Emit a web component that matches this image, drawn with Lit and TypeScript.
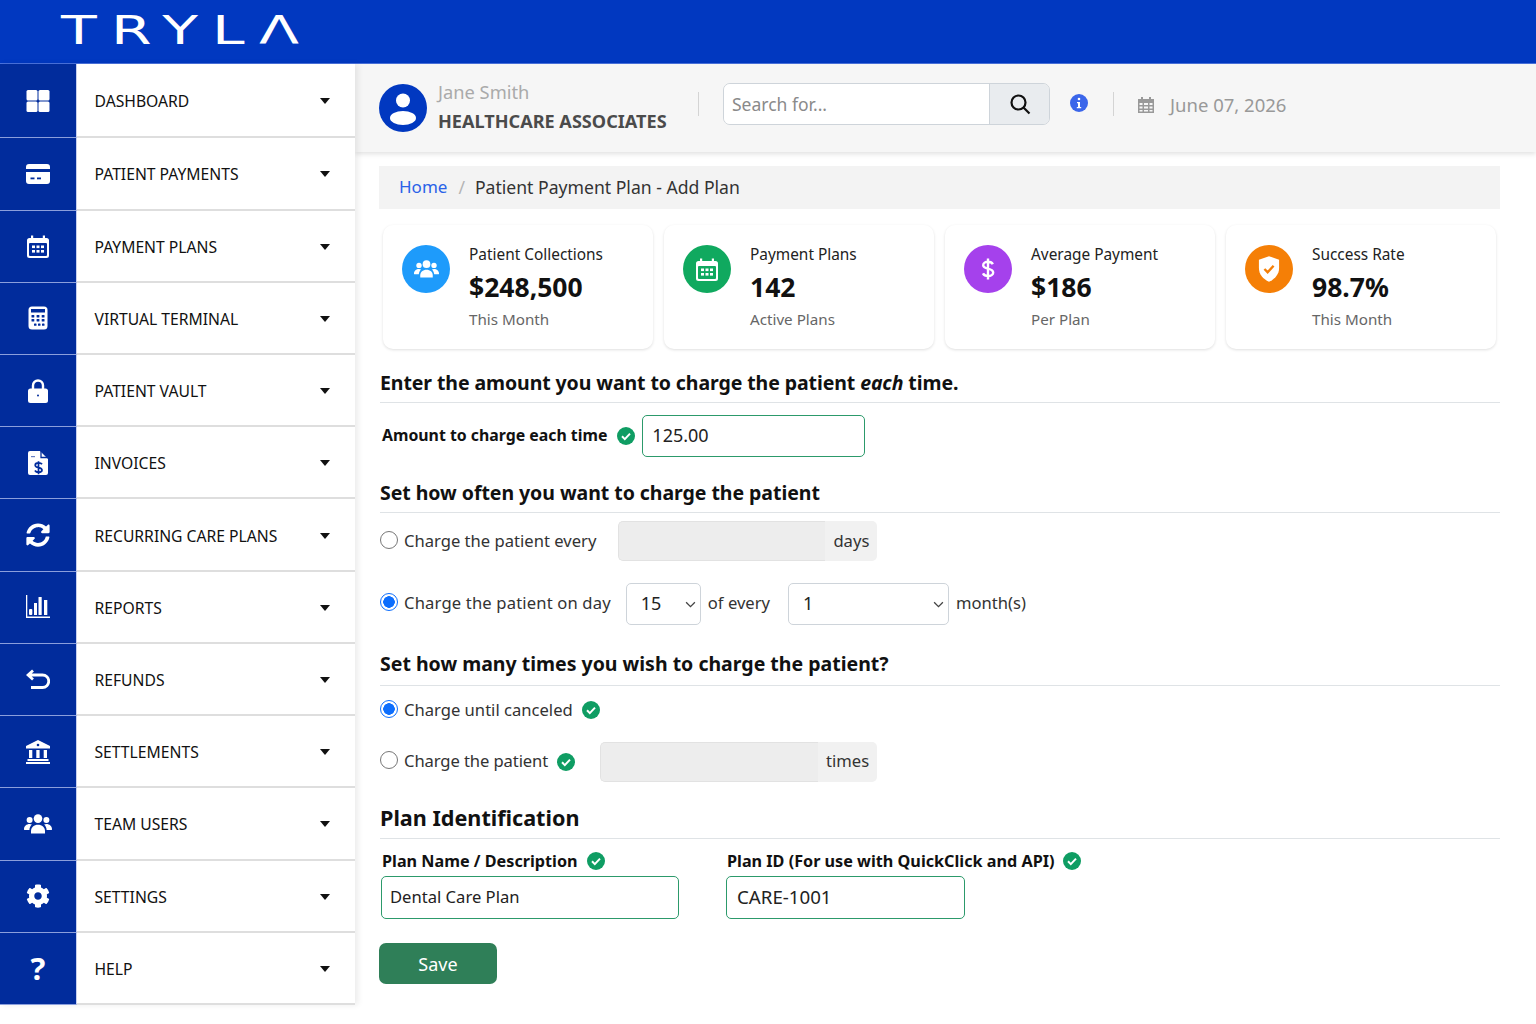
import { LitElement, html, css } from 'lit';
import { customElement } from 'lit/decorators.js';

const B = '#012c9c';

const syncPath = 'M370.72 133.28C339.458 104.008 298.888 87.962 255.848 88c-77.458.068-144.328 53.178-162.791 126.85-1.344 5.363-6.122 9.15-11.651 9.15H24.103c-7.498 0-13.194-6.807-11.807-14.176C33.933 94.924 134.813 8 256 8c66.448 0 126.791 26.136 171.315 68.685L463.03 40.97C478.149 25.851 504 36.559 504 57.941V192c0 13.255-10.745 24-24 24H345.941c-21.382 0-32.09-25.851-16.971-40.971l41.75-41.749zM32 296h134.059c21.382 0 32.09 25.851 16.971 40.971l-41.75 41.75c31.262 29.273 71.835 45.319 114.876 45.28 77.418-.07 144.315-53.144 162.787-126.849 1.344-5.363 6.122-9.15 11.651-9.15h57.304c7.498 0 13.194 6.807 11.807 14.176C478.067 417.076 377.187 504 256 504c-66.448 0-126.791-26.136-171.315-68.685L48.97 471.03C33.851 486.149 8 475.441 8 454.059V320c0-13.255 10.745-24 24-24z';
const gearPath = 'M487.4 315.7l-42.6-24.6c4.3-23.2 4.3-47 0-70.2l42.6-24.6c4.9-2.8 7.1-8.6 5.5-14-11.1-35.6-30-67.8-54.7-94.6-3.8-4.1-10-5.1-14.8-2.3L380.8 110c-17.9-15.4-38.5-27.3-60.8-35.1V25.8c0-5.6-3.9-10.5-9.4-11.7-36.7-8.2-74.3-7.8-109.2 0-5.5 1.2-9.4 6.1-9.4 11.7V75c-22.2 7.9-42.8 19.8-60.8 35.1L88.7 85.5c-4.9-2.8-11-1.9-14.8 2.3-24.7 26.7-43.6 58.9-54.7 94.6-1.7 5.4.6 11.2 5.5 14L67.3 221c-4.3 23.2-4.3 47 0 70.2l-42.6 24.6c-4.9 2.8-7.1 8.6-5.5 14 11.1 35.6 30 67.8 54.7 94.6 3.8 4.1 10 5.1 14.8 2.3l42.6-24.6c17.9 15.4 38.5 27.3 60.8 35.1v49.2c0 5.6 3.9 10.5 9.4 11.7 36.7 8.2 74.3 7.8 109.2 0 5.5-1.2 9.4-6.1 9.4-11.7v-49.2c22.2-7.9 42.8-19.8 60.8-35.1l42.6 24.6c4.9 2.8 11 1.9 14.8-2.3 24.7-26.7 43.6-58.9 54.7-94.6 1.5-5.5-.7-11.3-5.6-14.1zM256 336c-44.1 0-80-35.9-80-80s35.9-80 80-80 80 35.9 80 80-35.9 80-80 80z';

const usersIcon = html`<svg viewBox="0 0 28 20" width="28" height="20" fill="currentColor">
  <circle cx="14" cy="4.6" r="4.3"/><circle cx="5.6" cy="6" r="3"/><circle cx="22.4" cy="6" r="3"/>
  <path d="M7 19.5v-2.6c0-3.6 3-6.2 7-6.2s7 2.6 7 6.2v2.6z"/>
  <path d="M5.6 10c.8 0 1.7.2 2.3.6-1.5 1.3-2.4 3.3-2.5 5.4H.3C0 15.8 0 15.500 0 15c0-2.800 2.500-5 5.600-5zM22.400 10c-.8 0-1.700.2-2.300.6 1.500 1.300 2.400 3.300 2.500 5.400h5.100c.3-.2.3-.5.3-1 0-2.800-2.500-5-5.600-5z"/>
</svg>`;

const calIcon = (c: string) => html`<svg viewBox="0 0 24 24" width="24" height="24" fill="none">
  <path fill="currentColor" d="M5 1.500h2.200v2.500h9.600V1.500H19v2.500h1.500A2.500 2.500 0 0 1 23 6.500v15a2.500 2.500 0 0 1-2.500 2.500h-17A2.500 2.500 0 0 1 1 21.500v-15A2.500 2.500 0 0 1 3.500 4H5z"/>
  <rect x="3" y="9" width="18" height="13" rx="1" fill="${c}"/>
  <g fill="currentColor"><rect x="6" y="11.500" width="3" height="2.600"/><rect x="10.500" y="11.500" width="3" height="2.600"/><rect x="15" y="11.500" width="3" height="2.600"/><rect x="6" y="16" width="3" height="2.600"/><rect x="10.500" y="16" width="3" height="2.600"/><rect x="15" y="16" width="3" height="2.600"/></g>
</svg>`;

const menu = [
  { label: 'DASHBOARD', icon: html`<svg viewBox="0 0 24 24" width="24" height="24" fill="currentColor"><rect x="0.500" y="1" width="11" height="10.500" rx="1.500"/><rect x="12.500" y="1" width="11" height="10.500" rx="1.500"/><rect x="0.500" y="12.500" width="11" height="10.500" rx="1.500"/><rect x="12.500" y="12.500" width="11" height="10.500" rx="1.500"/></svg>` },
  { label: 'PATIENT PAYMENTS', icon: html`<svg viewBox="0 0 24 20" width="24" height="20"><path fill="currentColor" d="M3 0h18a3 3 0 0 1 3 3v2H0V3a3 3 0 0 1 3-3zM0 8h24v9a3 3 0 0 1-3 3H3a3 3 0 0 1-3-3z"/><rect x="4.500" y="13.500" width="4" height="1.800" fill="${B}"/><rect x="11" y="13.500" width="4" height="1.800" fill="${B}"/></svg>` },
  { label: 'PAYMENT PLANS', icon: calIcon(B) },
  { label: 'VIRTUAL TERMINAL', icon: html`<svg viewBox="0 0 20 24" width="20" height="24"><rect width="19" height="23" x="0.500" y="0.500" rx="3.500" fill="currentColor"/><rect x="3" y="3" width="14" height="3.500" fill="${B}"/><g fill="${B}"><rect x="3.500" y="9" width="2.800" height="2.500" rx=".6"/><rect x="8.600" y="9" width="2.800" height="2.500" rx=".6"/><rect x="13.700" y="9" width="2.800" height="2.500" rx=".6"/><rect x="3.500" y="13" width="2.800" height="2.500" rx=".6"/><rect x="8.600" y="13" width="2.800" height="2.500" rx=".6"/><rect x="13.700" y="13" width="2.800" height="2.500" rx=".6"/><rect x="6" y="17.500" width="2.500" height="2.300" rx=".6"/><rect x="10" y="17.500" width="2.500" height="2.300" rx=".6"/><rect x="14" y="17.500" width="2.500" height="2.300" rx=".6"/></g></svg>` },
  { label: 'PATIENT VAULT', icon: html`<svg viewBox="0 0 20 24" width="20" height="24"><path d="M5 10V6.500a5 5 0 0 1 10 0V10" fill="none" stroke="currentColor" stroke-width="2.400"/><rect y="9.500" x="0" width="20" height="14.500" rx="2.500" fill="currentColor"/><circle cx="10" cy="16.500" r="1" fill="${B}"/></svg>` },
  { label: 'INVOICES', icon: html`<svg viewBox="0 0 20 24" width="20" height="24"><path fill="currentColor" d="M2 0h10l8 8v14a2 2 0 0 1-2 2H2a2 2 0 0 1-2-2V2a2 2 0 0 1 2-2z"/><path d="M13 0v6.500h7" fill="none" stroke="${B}" stroke-width="1.300"/><path d="M14 13.300c-.6-1-1.900-1.500-3.500-1.500-2 0-3.300 1-3.300 2.400 0 3.200 6.800 1.700 6.800 4.800 0 1.400-1.400 2.300-3.400 2.300-1.700 0-3-.7-3.700-1.800M10.500 10.300v13" fill="none" stroke="${B}" stroke-width="1.700"/><rect x="3" y="5" width="4" height="1.200" fill="${B}" opacity=".6"/></svg>` },
  { label: 'RECURRING CARE PLANS', icon: html`<svg viewBox="0 0 512 512" width="24" height="24" fill="currentColor"><path d="${syncPath}"/></svg>` },
  { label: 'REPORTS', icon: html`<svg viewBox="0 0 24 24" width="24" height="24" fill="currentColor"><path d="M0 0h1.300v21.500H24V23H0z"/><rect x="3" y="14" width="3.300" height="6" rx="1"/><rect x="8" y="8" width="3" height="12"/><rect x="12.500" y="2" width="3.200" height="18" rx=".6"/><rect x="18" y="5" width="3.300" height="15"/></svg>` },
  { label: 'REFUNDS', icon: html`<svg viewBox="0 0 24 20" width="24" height="20" fill="none" stroke="currentColor" stroke-width="2.800"><path d="M7 1.500 2 6l5 4.500M2.500 6h14a5.500 5.500 0 0 1 0 12.500H5"/></svg>` },
  { label: 'SETTLEMENTS', icon: html`<svg viewBox="0 0 24 24" width="24" height="24"><path fill="currentColor" d="M12 0 24 6v2.500H0V6z"/><circle cx="12" cy="5" r="1.300" fill="${B}"/><g fill="currentColor"><rect x="3" y="10" width="3.300" height="8"/><rect x="10.300" y="10" width="3.300" height="8"/><rect x="17.700" y="10" width="3.300" height="8"/><rect x="1.500" y="19" width="21" height="2"/><rect y="22" width="24" height="2"/></g></svg>` },
  { label: 'TEAM USERS', icon: usersIcon },
  { label: 'SETTINGS', icon: html`<svg viewBox="0 0 512 512" width="24" height="24" fill="currentColor"><path d="${gearPath}"/></svg>` },
  { label: 'HELP', icon: html`<span class="qmark">?</span>` },
];

const cards = [
  { title: 'Patient Collections', value: '$248,500', sub: 'This Month', color: '#1e9bfb', icon: html`<svg viewBox="0 0 28 20" width="25" height="18" fill="#fff"><circle cx="14" cy="4.600" r="4.300"/><circle cx="5.600" cy="6" r="3"/><circle cx="22.400" cy="6" r="3"/><path d="M7 19.500v-2.600c0-3.600 3-6.200 7-6.200s7 2.600 7 6.200v2.600z"/><path d="M5.600 10c.8 0 1.700.2 2.300.6-1.500 1.300-2.400 3.300-2.500 5.400H.3C0 15.800 0 15.500 0 15c0-2.800 2.500-5 5.600-5zM22.400 10c-.8 0-1.700.2-2.300.6 1.500 1.300 2.400 3.300 2.500 5.400h5.100c.3-.2.3-.5.3-1 0-2.800-2.500-5-5.600-5z"/></svg>` },
  { title: 'Payment Plans', value: '142', sub: 'Active Plans', color: '#10a95f', icon: html`<span class="white">${calIcon('#10a95f')}</span>` },
  { title: 'Average Payment', value: '$186', sub: 'Per Plan', color: '#a541ec', icon: html`<svg viewBox="0 0 20 28" width="16" height="24"><path d="M16 8c-.9-2-3.200-3-6-3-3.400 0-6 1.700-6 4.200 0 5.600 12.500 3 12.500 9.100 0 2.600-2.800 4.400-6.300 4.400-3 0-5.400-1.200-6.500-3.300M10 1v26" fill="none" stroke="#fff" stroke-width="3" /></svg>` },
  { title: 'Success Rate', value: '98.7%', sub: 'This Month', color: '#f57f06', icon: html`<svg viewBox="0 0 24 28" width="22" height="26"><path fill="#fff" d="M12 0 23 4v9c0 7-4.500 12-11 15C5.500 25 1 20 1 13V4z"/><path d="M7 14l3.500 3.500L17 10.500" fill="none" stroke="#f57f06" stroke-width="2.600"/></svg>` },
];

const check = html`<svg class="check" viewBox="0 0 18 18" width="18" height="18"><circle cx="9" cy="9" r="9" fill="#0f9d63"/><path d="M5 9.300l2.800 2.800L13 6.600" fill="none" stroke="#fff" stroke-width="2"/></svg>`;

const chevron = html`<svg class="chev" viewBox="0 0 12 8" width="11" height="7" fill="none" stroke="#444" stroke-width="1.500"><path d="M1 1.500l5 5 5-5"/></svg>`;

@customElement('app-root')
export class AppRoot extends LitElement {
  static styles = css`
    :host {
      display: block;
      width: 1536px;
      height: 1024px;
      overflow: hidden;
      background: #fff;
      font-family: 'Noto Sans', 'Liberation Sans', sans-serif;
      color: #222;
    }
    .top {
      height: 63px;
      background: #0138c0;
      padding-left: 61px;
      border-bottom: 1px solid #4a72dd;
      display: flex;
      align-items: center;
    }
    .logo {
      font-family: 'DejaVu Sans', sans-serif;
      font-size: 39px;
      line-height: 60px;
      letter-spacing: 9.500px;
      color: #fff;
      white-space: nowrap;
      transform: scaleX(1.500);
      transform-origin: left center;
      padding-bottom: 2px;
    }
    .body { display: flex; height: 960px; }
    .side {
      width: 355px;
      height: 941px;
      flex: none;
      display: grid;
      grid-template-rows: 74.300px repeat(12, 1fr);
      box-shadow: 3px 0 6px rgba(0, 0, 0, .08);
      z-index: 2;
    }
    .item { display: flex; min-height: 0; }
    .ico {
      width: 76px;
      flex: none;
      background: #012c9c;
      color: #fff;
      display: flex;
      align-items: center;
      justify-content: center;
      border-bottom: 1px solid #8b9fdc;
      border-right: 1px solid #c6d0ef;
    }
    .qmark { font: 700 31px 'Noto Sans', sans-serif; }
    .lbl {
      flex: 1;
      background: #fff;
      border-bottom: 2px solid #dedede;
      display: flex;
      align-items: center;
      justify-content: space-between;
      padding: 2px 25px 0 17.500px;
      font-size: 15.700px;
      color: #111;
    }
    .caret {
      width: 0;
      height: 0;
      border-left: 5px solid transparent;
      border-right: 5px solid transparent;
      border-top: 6px solid #111;
    }
    .main { flex: 1; min-width: 0; }
    .head {
      height: 88px;
      background: #f6f6f6;
      box-shadow: 0 2px 5px rgba(0, 0, 0, .12);
      display: flex;
      align-items: center;
      padding-left: 24px;
    }
    .avatar { flex: none; margin-right: 11px; }
    .who { width: 260px; margin-top: -2px; }
    .who .name { font-size: 18.300px; line-height: 28px; color: #aaa; }
    .who .org { font-size: 18.100px; line-height: 30px; font-weight: 700; color: #4b4b4b; white-space: nowrap; }
    .vr { width: 1px; height: 24px; background: #d4d4d4; flex: none; margin-bottom: 8px; }
    .search {
      display: flex;
      width: 327px;
      height: 42px;
      margin: 0 0 8px 24px;
      border: 1px solid #ced4da;
      border-radius: 7px;
      overflow: hidden;
      box-sizing: border-box;
    }
    .search input {
      flex: 1;
      min-width: 0;
      border: 0;
      padding: 0 8px;
      background: #fff;
      font: 17.500px 'Noto Sans', sans-serif;
      outline: none;
    }
    .search input::placeholder { color: #8a8a8a; }
    .search button {
      width: 60px;
      border: 0;
      border-left: 1px solid #ced4da;
      background: #e9ecef;
      display: flex;
      align-items: center;
      justify-content: center;
      padding: 0;
    }
    .info { margin: 0 25px 10px 20px; flex: none; }
    .date { display: flex; align-items: center; margin: 0 0 7px 24px; gap: 16px; color: #999; font-size: 18.500px; }
    .content { padding: 14px 36px 0 24px; }
    .crumb {
      height: 43px;
      background: #f3f3f3;
      display: flex;
      align-items: center;
      padding: 0 0 2px 20px;
      box-sizing: border-box;
      font-size: 17.600px;
      color: #333;
    }
    .crumb a { color: #2a62e8; text-decoration: none; font-size: 17px; }
    .crumb .sep { color: #b5b5b5; margin: 0 10px 0 11px; }
    .cards {
      display: grid;
      grid-template-columns: repeat(4, 270px);
      gap: 11px;
      margin: 16px 4px 0;
    }
    .card {
      height: 124px;
      box-sizing: border-box;
      background: #fff;
      border-radius: 10px;
      box-shadow: 0 1px 3px rgba(0, 0, 0, .13);
      padding: 20px 0 0 19px;
      display: flex;
      gap: 19px;
    }
    .badge {
      width: 48px;
      height: 48px;
      border-radius: 50%;
      display: flex;
      align-items: center;
      justify-content: center;
      flex: none;
    }
    .white { color: #fff; display: flex; }
    .card .t { font-size: 15.400px; line-height: 20px; color: #222; }
    .card .v { font-size: 26.500px; line-height: 34px; font-weight: 700; margin-top: 5px; color: #111; }
    .card .s { font-size: 15.200px; line-height: 20px; color: #666; margin-top: 5px; }
    h2 {
      margin: 15px 0 0 1px;
      font-size: 19.500px;
      line-height: 38px;
      height: 38px;
      font-weight: 700;
      color: #111;
      border-bottom: 1px solid #dfe3e6;
    }
    h2.first { letter-spacing: -.09px; }
    h2.second { margin-top: 17px; letter-spacing: -.05px; }
    h2.h3 { margin-top: 20px; height: 40px; }
    h2.h4 { margin-top: 16px; height: 40px; line-height: 40px; font-size: 21.600px; }
    .row { display: flex; align-items: center; font-size: 16.600px; color: #333; }
    .row > span { padding-bottom: 2px; }
    .row.lift > span, .row.lift .unit { padding-bottom: 4px; }
    .row.lift input[type='radio'] { margin-bottom: 4px; }
    .r1 { margin-top: 12px; padding-left: 3px; }
    .strong { font-weight: 700; color: #111; font-size: 16.200px; white-space: nowrap; }
    .r1 .strong { font-size: 15.850px; }
    input.ok {
      box-sizing: border-box;
      border: 1.500px solid #2c9a6b;
      border-radius: 5px;
      font: 18px 'Noto Sans', sans-serif;
      color: #222;
      padding: 0 9px 2px;
      outline: none;
      background: #fff;
    }
    input.dental { font-size: 16.600px; padding-left: 8px; }
    input.care { font-size: 18.700px; padding-left: 10px; }
    .amount { width: 223px; height: 42px; margin-left: 7px; }
    .check { flex: none; margin-left: 9px; }
    .r1 .check { margin-left: 10px; }
    input[type='radio'] {
      appearance: none;
      box-sizing: border-box;
      width: 18px;
      height: 18px;
      margin: 0 6px 2px 1px;
      border: 1.500px solid #777;
      border-radius: 50%;
      background: #fff;
      flex: none;
    }
    input[type='radio']:checked {
      border-color: #0d6efd;
      background: radial-gradient(circle, #0d6efd 0 5.500px, #fff 6px);
    }
    .tight { letter-spacing: .16px; }
    .narrow { letter-spacing: -.1px; }
    .group {
      display: flex;
      height: 40px;
      background: #f1f1f1;
      border-radius: 5px;
      box-sizing: border-box;
      overflow: hidden;
    }
    .group .fill {
      background: #ededed;
      border: 1px solid #e2e2e2;
      border-right: 0;
      border-radius: 5px 0 0 5px;
      box-sizing: border-box;
    }
    .group .unit { flex: 1; display: flex; align-items: center; justify-content: center; color: #333; padding-bottom: 2px; box-sizing: border-box; }
    .sel {
      position: relative;
      display: flex;
      height: 42px;
      flex: none;
    }
    .sel select {
      appearance: none;
      width: 100%;
      border: 1px solid #ced4da;
      border-radius: 5px;
      background: #fff;
      color: #222;
      font: 18px 'Noto Sans', sans-serif;
      padding: 0 14px 2px;
    }
    .chev { position: absolute; right: 5px; top: 18px; pointer-events: none; }
    .plan { display: flex; margin-top: 11px; padding-left: 2px; }
    .field { display: flex; flex-direction: column; }
    .field .lab { display: flex; align-items: center; height: 22px; padding-left: 1px; }
    .field input { margin-top: 4px; height: 43px; }
    .save {
      display: block;
      margin-top: 24px;
      width: 118px;
      height: 41px;
      background: #2f7f58;
      color: #fff;
      border: 0;
      border-radius: 7px;
      font: 18px 'Noto Sans', sans-serif;
    }
  `;

  render() {
    return html`
      <div class="top"><span class="logo">TRYLΛ</span></div>
      <div class="body">
        <nav class="side">
          ${menu.map(m => html`
            <div class="item">
              <div class="ico">${m.icon}</div>
              <div class="lbl"><span>${m.label}</span><span class="caret"></span></div>
            </div>`)}
        </nav>
        <div class="main">
          <header class="head">
            <svg class="avatar" viewBox="0 0 48 48" width="48" height="48">
              <circle cx="24" cy="24" r="24" fill="#0138c0"/>
              <circle cx="24" cy="16.500" r="7" fill="#fff"/>
              <ellipse cx="24" cy="34" rx="13" ry="7" fill="#fff"/>
            </svg>
            <div class="who">
              <div class="name">Jane Smith</div>
              <div class="org">HEALTHCARE ASSOCIATES</div>
            </div>
            <span class="vr"></span>
            <div class="search">
              <input placeholder="Search for..." />
              <button aria-label="Search">
                <svg viewBox="0 0 24 24" width="24" height="24" fill="none" stroke="#111" stroke-width="2.200"><circle cx="10.500" cy="10.500" r="7"/><path d="M15.500 15.500 21.500 21.500"/></svg>
              </button>
            </div>
            <svg class="info" viewBox="0 0 18 18" width="18" height="18"><circle cx="9" cy="9" r="9" fill="#3b66ea"/><circle cx="9" cy="5" r="1.300" fill="#fff"/><path d="M7 8h3v5h1.200v1.200H6.800V13H8V9.200H7z" fill="#fff"/></svg>
            <span class="vr"></span>
            <div class="date">
              <svg viewBox="0 0 16 16" width="16" height="16" fill="#999"><path d="M3 0h2v2h6V0h2v2h3v14H0V2h3zM1.500 6v2h3V6zm4.500 0v2h4V6zm5.500 0v2h3V6zm-10 3.500v2h3v-2zm4.500 0v2h4v-2zm5.500 0v2h3v-2zM1.500 13v1.500h3V13zm4.500 0v1.500h4V13zm5.500 0v1.500h3V13z"/></svg>
              <span>June 07, 2026</span>
            </div>
          </header>
          <div class="content">
            <div class="crumb"><a href="#">Home</a><span class="sep">/</span><span>Patient Payment Plan - Add Plan</span></div>
            <section class="cards">
              ${cards.map(c => html`
                <div class="card">
                  <div class="badge" style="background:${c.color}">${c.icon}</div>
                  <div>
                    <div class="t">${c.title}</div>
                    <div class="v">${c.value}</div>
                    <div class="s">${c.sub}</div>
                  </div>
                </div>`)}
            </section>

            <h2 class="first">Enter the amount you want to charge the patient <em>each</em> time.</h2>
            <div class="row r1">
              <span class="strong">Amount to charge each time</span>${check}
              <input class="ok amount" value="125.00" />
            </div>

            <h2 class="second">Set how often you want to charge the patient</h2>
            <div class="row" style="margin-top:8px">
              <input type="radio" name="often" />
              <span>Charge the patient every</span>
              <div class="group" style="width:259px;margin-left:22px">
                <div class="fill" style="width:207px"></div>
                <div class="unit">days</div>
              </div>
            </div>
            <div class="row lift" style="margin-top:22px">
              <input type="radio" name="often" checked />
              <span class="tight">Charge the patient on day</span>
              <div class="sel" style="width:75px;margin-left:15px">
                <select><option>15</option></select>${chevron}
              </div>
              <span style="margin:0 18px 0 7px">of every</span>
              <div class="sel" style="width:161px">
                <select><option>1</option></select>${chevron}
              </div>
              <span style="margin-left:7px">month(s)</span>
            </div>

            <h2 class="h3">Set how many times you wish to charge the patient?</h2>
            <div class="row" style="margin-top:12px;height:24px">
              <input type="radio" name="times" checked />
              <span>Charge until canceled</span>${check}
            </div>
            <div class="row lift" style="margin-top:20px">
              <input type="radio" name="times" />
              <span class="narrow">Charge the patient</span>${check}
              <div class="group" style="width:277px;margin-left:25px">
                <div class="fill" style="width:218px"></div>
                <div class="unit">times</div>
              </div>
            </div>

            <h2 class="h4">Plan Identification</h2>
            <div class="plan">
              <div class="field" style="width:345px">
                <div class="lab"><span class="strong">Plan Name / Description</span>${check}</div>
                <input class="ok dental" style="width:298px" value="Dental Care Plan" />
              </div>
              <div class="field">
                <div class="lab"><span class="strong">Plan ID (For use with QuickClick and API)</span>${check}</div>
                <input class="ok care" style="width:239px" value="CARE-1001" />
              </div>
            </div>
            <button class="save">Save</button>
          </div>
        </div>
      </div>
    `;
  }
}
